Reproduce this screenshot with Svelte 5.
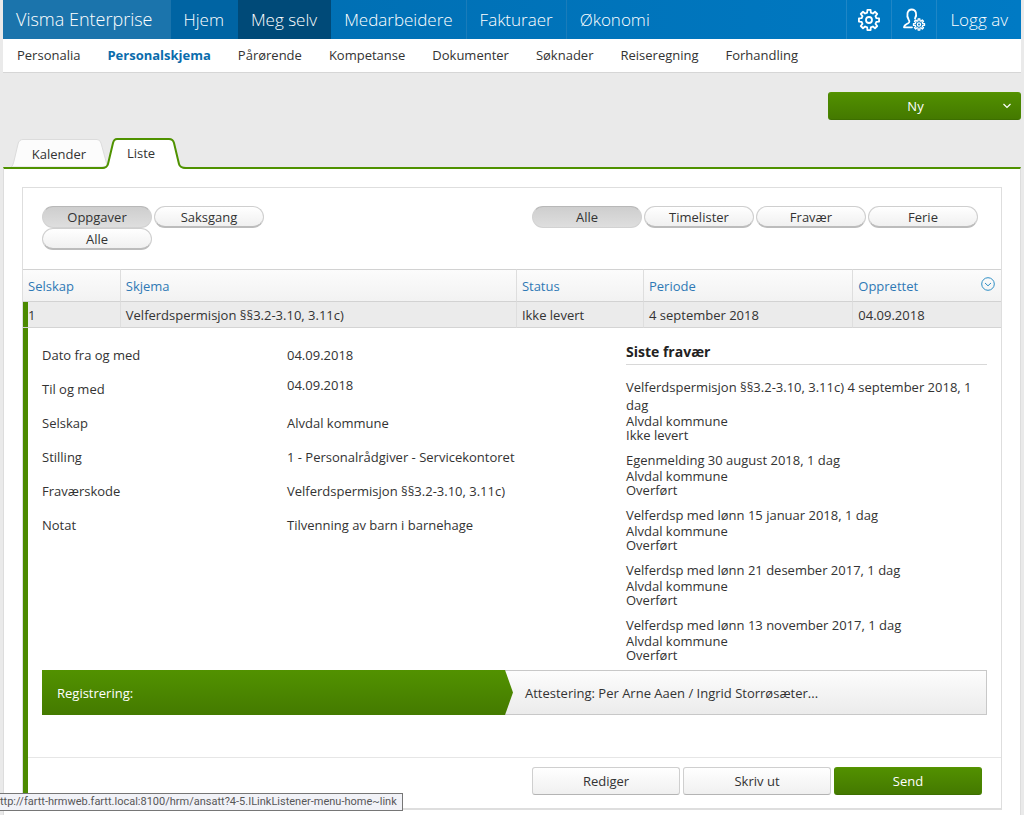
<script>
  const menu = ['Hjem', 'Meg selv', 'Medarbeidere', 'Fakturaer', 'Økonomi'];
  const submenu = ['Personalia', 'Personalskjema', 'Pårørende', 'Kompetanse', 'Dokumenter', 'Søknader', 'Reiseregning', 'Forhandling'];
  const views = ['Oppgaver', 'Saksgang', 'Alle'];
  const kinds = ['Alle', 'Timelister', 'Fravær', 'Ferie'];
  const fields = [
    ['Dato fra og med', '04.09.2018'],
    ['Til og med', '04.09.2018'],
    ['Selskap', 'Alvdal kommune'],
    ['Stilling', '1 - Personalrådgiver - Servicekontoret'],
    ['Fraværskode', 'Velferdspermisjon §§3.2-3.10, 3.11c)'],
    ['Notat', 'Tilvenning av barn i barnehage']
  ];
  const absences = [
    ['Velferdspermisjon §§3.2-3.10, 3.11c) 4 september 2018, 1 dag', 'Ikke levert'],
    ['Egenmelding 30 august 2018, 1 dag', 'Overført'],
    ['Velferdsp med lønn 15 januar 2018, 1 dag', 'Overført'],
    ['Velferdsp med lønn 21 desember 2017, 1 dag', 'Overført'],
    ['Velferdsp med lønn 13 november 2017, 1 dag', 'Overført']
  ];
  let view = $state('Oppgaver');
  let kind = $state('Alle');

  // Outline of a cog with eight teeth around (cx, cy).
  function cog(cx, cy, inner, outer) {
    const points = [];
    for (let i = 0; i < 8; i++) {
      for (const [offset, r] of [[-14, inner], [-9, outer], [9, outer], [14, inner]]) {
        const a = ((i * 45 + offset) * Math.PI) / 180;
        points.push(`${(cx + r * Math.sin(a)).toFixed(2)} ${(cy - r * Math.cos(a)).toFixed(2)}`);
      }
    }
    return `M${points.join('L')}Z`;
  }
</script>

<div class="page">
  <header>
    <nav class="top" aria-label="Hovedmeny">
      <a class="brand" href="#hjem">Visma Enterprise</a>
      {#each menu as item}
        <a href="#meny" class:hjem={item === 'Hjem'} class:current={item === 'Meg selv'}>{item}</a>
      {/each}
      <a class="tool first" href="#innstillinger" aria-label="Innstillinger">
        <svg width="24" height="24" viewBox="0 0 24 24"><path d={cog(12, 12, 7.6, 10.2)} /><circle cx="12" cy="12" r="3" /></svg>
      </a>
      <a class="tool" href="#profil" aria-label="Profil">
        <svg width="24" height="24" viewBox="0 0 24 24">
          <path d="M10 19.300H2C2 17 4 16.400 6.200 15.200C7.600 14.400 7.600 13.200 6.800 12C4 7.500 5.200 1.500 9.800 1.500C14 1.500 15.400 6.600 13 10.500" />
          <path class="fine" d={cog(17, 16.5, 3.8, 5.6)} /><circle class="fine" cx="17" cy="16.5" r="1.6" />
        </svg>
      </a>
      <a class="logout" href="#logg-av">Logg av</a>
    </nav>
    <nav class="sub" aria-label="Undermeny">
      {#each submenu as item}
        <a href="#undermeny" class:active={item === 'Personalskjema'}>{item}</a>
      {/each}
    </nav>
  </header>

  <div class="actions">
    <button class="green new" type="button">
      <span>Ny</span>
      <svg width="10" height="6" viewBox="0 0 10 6"><path d="M1.5 1L5 4.5L8.5 1" /></svg>
    </button>
  </div>

  <nav class="tabs" aria-label="Visning">
    <a class="tab kalender" href="#kalender">
      <svg width="96" height="28" viewBox="0 0 96 28"><path d="M0 28C2 27 2 25 3 22L7 5Q8 .500 12 .500H86Q89 .500 90 4L96 26V28Z" fill="#fcfcfc" stroke="#dcdcdc" /></svg>
      <span>Kalender</span>
    </a>
    <a class="tab liste" href="#liste">
      <svg width="84" height="31" viewBox="0 0 84 31">
        <path d="M0 31Q5 30 6 26L11 6Q12 2 15 2H67Q71 2 72 6L77 26Q78 30 84 31Z" fill="#fff" />
        <path d="M0 30Q5 30 6 26L11 5Q12 1 15 1H67Q71 1 72 5L77 26Q78 30 84 30" fill="none" stroke="#4f9200" stroke-width="2" />
      </svg>
      <span>Liste</span>
    </a>
  </nav>

  <main>
    <section class="card">
      <div class="filters">
        <div class="pills views">
          {#each views as item}
            <button type="button" class="pill" class:on={view === item} onclick={() => (view = item)}>{item}</button>
          {/each}
        </div>
        <div class="pills">
          {#each kinds as item}
            <button type="button" class="pill" class:on={kind === item} onclick={() => (kind = item)}>{item}</button>
          {/each}
        </div>
      </div>

      <table>
        <thead>
          <tr>
            <th class="c1">Selskap</th>
            <th class="c2">Skjema</th>
            <th class="c3">Status</th>
            <th class="c4">Periode</th>
            <th class="c5">
              <div class="last">
                Opprettet
                <button type="button" class="expand" aria-label="Velg kolonner">
                  <svg width="14" height="14" viewBox="0 0 14 14"><circle cx="7" cy="7" r="6.300" /><path d="M4 6L7 8.800L10 6" /></svg>
                </button>
              </div>
            </th>
          </tr>
        </thead>
        <tbody>
          <tr class="selected">
            <td>1</td>
            <td>Velferdspermisjon §§3.2-3.10, 3.11c)</td>
            <td>Ikke levert</td>
            <td>4 september 2018</td>
            <td>04.09.2018</td>
          </tr>
          <tr>
            <td class="detail" colspan="5">
              <div class="columns">
                <dl>
                  {#each fields as [label, value], i}
                    <dt>{label}</dt>
                    <dd class:raised={i === 1}>{value}</dd>
                  {/each}
                </dl>
                <div class="recent">
                  <h2>Siste fravær</h2>
                  {#each absences as [title, status]}
                    <div class="absence">
                      <p class="title">{title}</p>
                      <p>Alvdal kommune</p>
                      <p>{status}</p>
                    </div>
                  {/each}
                </div>
              </div>
              <div class="flow">
                <div class="step done">Registrering:</div>
                <div class="step">Attestering: Per Arne Aaen / Ingrid Storrøsæter...</div>
              </div>
              <div class="buttons">
                <button type="button">Rediger</button>
                <button type="button">Skriv ut</button>
                <button type="button" class="green">Send</button>
              </div>
            </td>
          </tr>
        </tbody>
      </table>
    </section>
  </main>
  <div class="status">ttp://fartt-hrmweb.fartt.local:8100/hrm/ansatt?4-5.ILinkListener-menu-home~link</div>
</div>

<style>
  :global(body) { background: #eaeaea; }
  .page {
    position: relative;
    box-sizing: border-box;
    min-height: 100vh;
    display: flex;
    flex-direction: column;
    padding: 0 3px;
    font: 13px/18px "Open Sans", sans-serif;
    color: #333;
  }
  a { color: inherit; text-decoration: none; }
  button { font: inherit; color: inherit; cursor: pointer; box-sizing: border-box; }
  svg { display: block; }

  .top {
    display: flex;
    height: 39px;
    background: linear-gradient(90deg, #006bad, #007ac4);
    color: #fff;
    font-size: 17px;
    font-weight: 300;
    line-height: 39px;
  }
  .top a { padding: 0 13px; border-right: 1px solid #1a7cba; white-space: nowrap; }
  .top .brand { background: #1b74ac; padding-right: 17px; font-size: 18px; border-color: #1b74ac; }
  .top .hjem { background: #0064a3; border-color: #0064a3; }
  .top .current { background: #004a78; border-color: #004a78; }
  .top a:nth-child(6) { border-right: 0; }
  .top .tool { display: flex; align-items: center; padding: 0 10px; border-right: 0; border-left: 1px solid #1f86c6; }
  .top .first { margin-left: auto; }
  .top .logout { border-right: 0; border-left: 1px solid #1f86c6; }
  .tool path, .tool circle { fill: none; stroke: #fff; stroke-width: 1.800; stroke-linejoin: round; stroke-linecap: round; }
  .tool .fine { stroke-width: 1.300; }

  .sub {
    display: flex;
    gap: 27px;
    height: 33px;
    padding: 0 14px;
    background: #fff;
    border-bottom: 1px solid #d6d6d6;
    line-height: 33px;
  }
  .sub .active { color: #0a6cac; font-weight: 700; }

  .actions { display: flex; justify-content: flex-end; padding: 19px 0 18px; }
  .green {
    border: 1px solid #417a00;
    border-color: #569400 #4a8600 #3d6f00;
    border-radius: 3px;
    background: linear-gradient(#529000, #447900);
    color: #fff;
  }
  .new { display: flex; align-items: center; width: 193px; height: 28px; padding: 0 8px 1px 0; }
  .new span { flex: 1; }
  .new path { fill: none; stroke: #fff; stroke-width: 1.200; }

  .tabs { display: flex; align-items: flex-end; padding-left: 8px; height: 29px; }
  .tab { display: grid; position: relative; }
  .tab svg, .tab span { grid-area: 1 / 1; }
  .tab span { z-index: 1; text-align: center; }
  .kalender span { padding-top: 2px; line-height: 26px; }
  .liste { margin: 0 0 -2px -5px; z-index: 2; }
  .liste span { padding-right: 6px; line-height: 31px; }

  main {
    flex: 1;
    background: #fff;
    border-top: 2px solid #4f9200;
    border-left: 1px solid #ddd;
    border-right: 1px solid #ddd;
    padding: 18px 18px 5px;
  }
  .card { border: 1px solid #dedede; border-bottom-width: 2px; }
  .filters { display: flex; justify-content: space-between; align-items: flex-start; padding: 18px 23px 19px 19px; }
  .pills { display: flex; flex-wrap: wrap; column-gap: 2px; }
  .views { width: 240px; }
  .pill {
    width: 110px;
    height: 22px;
    padding: 0;
    border: 1px solid #cfcfcf;
    border-bottom: 2px solid #bcbcbc;
    border-radius: 12px;
    background: linear-gradient(#fff, #f0f0f0);
    line-height: 20px;
  }
  .pill.on { background: linear-gradient(#cecece, #dedede); border: 1px solid #d2d2d2; border-top-color: #b8b8b8; }

  table { width: 100%; border-collapse: separate; border-spacing: 0; table-layout: fixed; }
  .c1 { width: 10%; }
  .c2 { width: 40.500%; }
  .c3 { width: 13%; }
  .c4 { width: 21.400%; }
  th, td { box-sizing: border-box; text-align: left; padding: 0 0 0 5px; }
  th {
    height: 33px;
    border-top: 1px solid #d2d2d2;
    border-bottom: 1px solid #d2d2d2;
    border-right: 1px solid #dedede;
    background: linear-gradient(#fcfcfc, #f2f2f2);
    color: #2f79b5;
    font-weight: 400;
  }
  th:last-child { border-right: 0; }
  .last { display: flex; justify-content: space-between; padding-right: 6px; }
  .expand { border: 0; padding: 0; background: none; height: 14px; }
  .expand circle, .expand path { fill: none; stroke: #2f8fc5; }
  .selected td { height: 26px; background: #ebebeb; border-right: 1px solid #dedede; border-bottom: 1px solid #d4d4d4; }
  .selected td:last-child { border-right: 0; }
  .selected td:first-child { box-shadow: inset 5px 0 #4c8a00; }
  .detail { box-shadow: inset 5px 0 #4c8a00; padding: 0 0 0 5px; }

  .columns { display: flex; padding: 14px 14px 0; }
  dl { flex: 1; display: grid; grid-template-columns: 245px 1fr; grid-auto-rows: 18px; row-gap: 16px; margin: 4px 0 0; }
  dd { margin: 0; }
  .raised { margin-top: -4px; }
  .recent { width: 361px; }
  h2 { margin: 0; padding-bottom: 3px; border-bottom: 1px solid #d8d8d8; font-size: 14px; line-height: 19px; color: #222; }
  .recent p { margin: 0; line-height: 14px; }
  .recent .title { line-height: 18px; }
  .absence { margin-bottom: 9px; }
  .absence:last-child { margin-bottom: 8px; }
  h2 + .absence { margin-top: 13px; }

  .flow { display: flex; margin: 0 14px; background: linear-gradient(#fdfdfd, #ebebeb); box-shadow: inset 0 0 0 1px #c8c8c8; }
  .step { flex: 1; padding: 14px 0 13px 12px; line-height: 18px; }
  .done {
    flex: 0 0 456px;
    padding-left: 15px;
    background: linear-gradient(#529200, #447a00);
    color: #fff;
    clip-path: polygon(0 0, 463px 0, 100% 50%, 463px 100%, 0 100%);
  }
  .buttons { display: flex; justify-content: flex-end; gap: 3px; margin-top: 42px; padding: 9px 19px 13px; border-top: 1px solid #e6e6e6; }
  .buttons button { width: 148px; height: 28px; padding: 0; border-radius: 3px; }
  .buttons button:not(.green) { border: 1px solid #cfcfcf; border-bottom-color: #b4b4b4; background: linear-gradient(#fff, #f0f0f0); }

  .status {
    position: fixed;
    left: 0;
    bottom: 4px;
    padding: 0 5px 0 0;
    border: 1px solid #767676;
    border-left: 0;
    background: #f1f2f7;
    color: #575757;
    font-family: Roboto, sans-serif;
    font-size: 11px;
    line-height: 16px;
    white-space: nowrap;
  }
</style>
